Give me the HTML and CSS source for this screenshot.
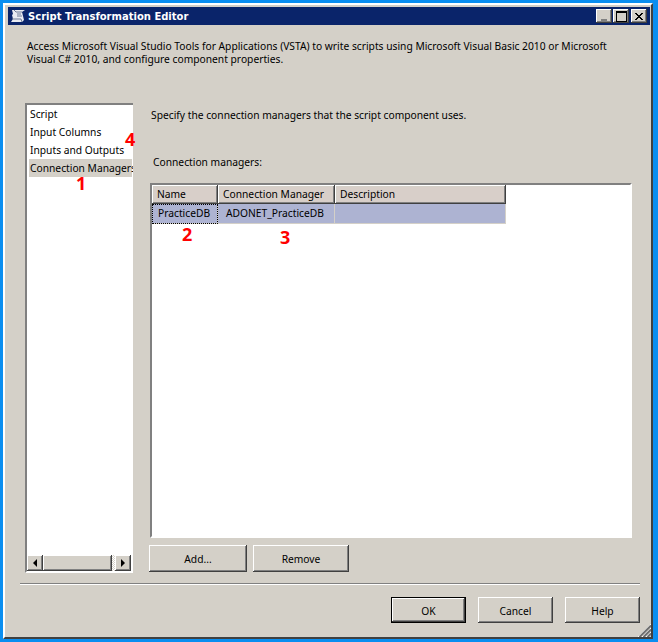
FILE: index.html
```html
<!DOCTYPE html>
<html lang="en">
<head>
    <meta charset="UTF-8">
    <title>Script Transformation Editor</title>
    <link rel="stylesheet" href="styles.css">
</head>
<body>
    <main class="window">
        <header class="titlebar">
            <svg class="title-icon" width="16" height="14" viewBox="0 0 16 14">
                <path d="M2 1h13l-3 2 1 4 1 4-2 2H1l2-3-1-4 1-1z" fill="#e8ebf2"/>
                <path d="M4 1l2 2h6M7 5h4M7 7h5" stroke="#6f7c98" fill="none"/>
                <path d="M2 10h9l1 3" stroke="#6f7c98" fill="none"/>
            </svg>
            <span class="title-text">Script Transformation Editor</span>
            <div class="title-buttons">
                <button class="title-btn raised"><span class="glyph-min"></span></button>
                <button class="title-btn raised"><span class="glyph-max"></span></button>
                <button class="title-btn raised">
                    <svg width="10" height="9" viewBox="0 0 10 9"><path d="M1 1l7 7M2 1l7 7M8 1l-7 7M9 1l-7 7" stroke="#000" fill="none"/></svg>
                </button>
            </div>
        </header>

        <p class="intro">Access Microsoft Visual Studio Tools for Applications (VSTA) to write scripts using Microsoft Visual Basic 2010 or Microsoft<br>Visual C# 2010, and configure component properties.</p>

        <div class="content">
            <nav class="sidebar sunken">
                <ul class="nav-list">
                    <li>Script</li>
                    <li>Input Columns</li>
                    <li>Inputs and Outputs</li>
                    <li class="selected">Connection Managers</li>
                </ul>
                <div class="hscroll">
                    <span class="scroll-btn raised"><span class="arrow-left"></span></span>
                    <span class="scroll-thumb raised"></span>
                    <span class="scroll-track"></span>
                    <span class="scroll-btn raised"><span class="arrow-right"></span></span>
                </div>
            </nav>

            <section class="panel">
                <p class="panel-desc">Specify the connection managers that the script component uses.</p>
                <label class="grid-label">Connection managers:</label>
                <div class="grid-box sunken">
                    <div class="grid">
                        <div class="grid-head raised">Name</div>
                        <div class="grid-head raised">Connection Manager</div>
                        <div class="grid-head raised">Description</div>
                        <div class="grid-cell focused">PracticeDB</div>
                        <div class="grid-cell">ADONET_PracticeDB</div>
                        <div class="grid-cell"></div>
                    </div>
                </div>
                <div class="panel-buttons">
                    <button class="btn raised btn-add">Add...</button>
                    <button class="btn raised btn-remove">Remove</button>
                </div>
            </section>
        </div>

        <div class="separator"></div>

        <footer class="footer">
            <button class="btn raised btn-foot btn-default">OK</button>
            <button class="btn raised btn-foot">Cancel</button>
            <button class="btn raised btn-foot">Help</button>
        </footer>

        <svg class="grip" width="13" height="13" viewBox="0 0 13 13">
            <path d="M0 13L13 0M4 13l9-9M8 13l5-5" stroke="#fff" stroke-width="1" fill="none"/>
            <path d="M1.500 13L13 1.500M5.500 13L13 5.500M9.500 13l3.500-3.500" stroke="#707070" stroke-width="2" fill="none"/>
        </svg>

        <span class="mark mark-1">1</span>
        <span class="mark mark-2">2</span>
        <span class="mark mark-3">3</span>
        <span class="mark mark-4">4</span>
    </main>
</body>
</html>
```

FILE: styles.css
```css
html, body {
    height: 100%;
    margin: 0;
}
body {
    background: #0a8ef0;
    font-family: "Noto Sans", "Liberation Sans", sans-serif;
    font-size: 10.25px;
    color: #000;
    padding: 3px 5px 3px 3px;
    box-sizing: border-box;
}
p {
    margin: 0;
}
button {
    font: inherit;
    color: inherit;
    border: none;
    padding: 0;
}
.raised {
    background: #d4d0c8;
    box-shadow: inset -1px -1px #404040, inset 1px 1px #fff, inset -2px -2px #808080, inset 2px 2px #d4d0c8;
}
.sunken {
    box-sizing: border-box;
    border: 2px solid;
    border-color: #808080 #fff #fff #808080;
}
.window {
    position: relative;
    box-sizing: border-box;
    height: 100%;
    padding: 2px 1px 0 3px;
    display: flex;
    flex-direction: column;
    background: #d4d0c8;
    border: 2px solid;
    border-color: #fff #404040 #404040 #fff;
}
.titlebar {
    height: 18px;
    flex: none;
    display: flex;
    align-items: center;
    background: #0a246a;
    color: #fff;
}
.title-icon {
    margin-left: 2px;
}
.title-text {
    margin-left: 2px;
    font-family: "DejaVu Sans", sans-serif;
    font-weight: bold;
    font-size: 10px;
}
.title-buttons {
    margin-left: auto;
    margin-right: 3px;
    display: flex;
}
.title-btn {
    width: 16px;
    height: 14px;
    display: flex;
    align-items: center;
    justify-content: center;
    margin-left: 1px;
}
.title-btn:last-child {
    margin-left: 2px;
}
.glyph-min {
    width: 6px;
    height: 2px;
    margin-top: 7px;
    background: #808080;
}
.glyph-max {
    width: 9px;
    height: 8px;
    border: 1px solid #000;
    border-top-width: 2px;
}
.intro {
    margin: 15px 0 0 19px;
    line-height: 13px;
    white-space: nowrap;
}
.content {
    margin: 37px 0 0 17px;
    display: flex;
    gap: 16px;
    height: 470px;
    flex: none;
}
.sidebar {
    width: 108px;
    border-right-width: 0;
    background: #fff;
    display: flex;
    flex-direction: column;
    overflow: hidden;
}
.nav-list {
    list-style: none;
    margin: 0;
    padding: 0 0 0 2px;
    flex: 1;
    white-space: nowrap;
}
.nav-list li {
    height: 18px;
    line-height: 18px;
    padding-left: 1px;
}
.nav-list .selected {
    margin-right: 1px;
    background: #d4d0c8;
}
.hscroll {
    height: 16px;
    margin-right: 2px;
    display: flex;
}
.scroll-btn {
    width: 16px;
    flex: none;
    display: flex;
    align-items: center;
    justify-content: center;
}
.scroll-thumb {
    flex: 1;
}
.scroll-track {
    width: 3px;
    background: repeating-conic-gradient(#d4d0c8 0 25%, #fff 0 50%) 0 0 / 2px 2px;
}
.arrow-left, .arrow-right {
    width: 0;
    height: 0;
    border-top: 4px solid transparent;
    border-bottom: 4px solid transparent;
}
.arrow-left {
    border-right: 4px solid #000;
}
.arrow-right {
    border-left: 4px solid #000;
}
.panel {
    width: 483px;
    display: flex;
    flex-direction: column;
}
.panel-desc {
    margin: 5px 0 0 2px;
    line-height: 15px;
}
.grid-label {
    margin: 32px 0 0 4px;
    line-height: 15px;
}
.grid-box {
    margin: 13px 0 0 1px;
    height: 355px;
    background: #fff;
}
.grid {
    display: grid;
    grid-template-columns: 66px 117px 171px;
    grid-template-rows: 19px 20px;
    width: 354px;
}
.grid-head {
    line-height: 19px;
    padding-left: 5px;
    background-color: #d8cfc9;
}
.grid-cell {
    line-height: 19px;
    padding-left: 8px;
    background: #adb3d2;
    border-right: 1px solid #d4d0c8;
    border-bottom: 1px solid #d4d0c8;
}
.focused {
    outline: 1px dotted #000;
    outline-offset: -1px;
    padding-left: 6px;
}
.panel-buttons {
    margin-top: 7px;
    display: flex;
    gap: 6px;
}
.btn {
    height: 27px;
    text-align: center;
}
.btn-add {
    width: 98px;
}
.btn-remove {
    width: 96px;
}
.separator {
    height: 2px;
    flex: none;
    margin: 10px 10px 0 12px;
    background: #808080;
    border-bottom: 1px solid #fff;
    box-sizing: border-box;
}
.footer {
    margin: 12px 10px 0 0;
    display: flex;
    justify-content: flex-end;
    gap: 12px;
}
.btn-foot {
    width: 75px;
    height: 26px;
    padding-top: 1px;
}
.btn-default {
    box-shadow: inset 0 0 0 1px #000, inset -2px -2px #404040, inset 2px 2px #fff, inset -3px -3px #808080;
}
.grip {
    position: absolute;
    right: 0;
    bottom: 0;
}
.mark {
    position: absolute;
    font-family: "Open Sans", sans-serif;
    font-weight: bold;
    font-size: 18px;
    line-height: 14px;
    color: #f00;
}
.mark-1 { left: 71px; top: 171px; }
.mark-2 { left: 177px; top: 222px; }
.mark-3 { left: 275px; top: 225px; }
.mark-4 { left: 120px; top: 127px; }
```
